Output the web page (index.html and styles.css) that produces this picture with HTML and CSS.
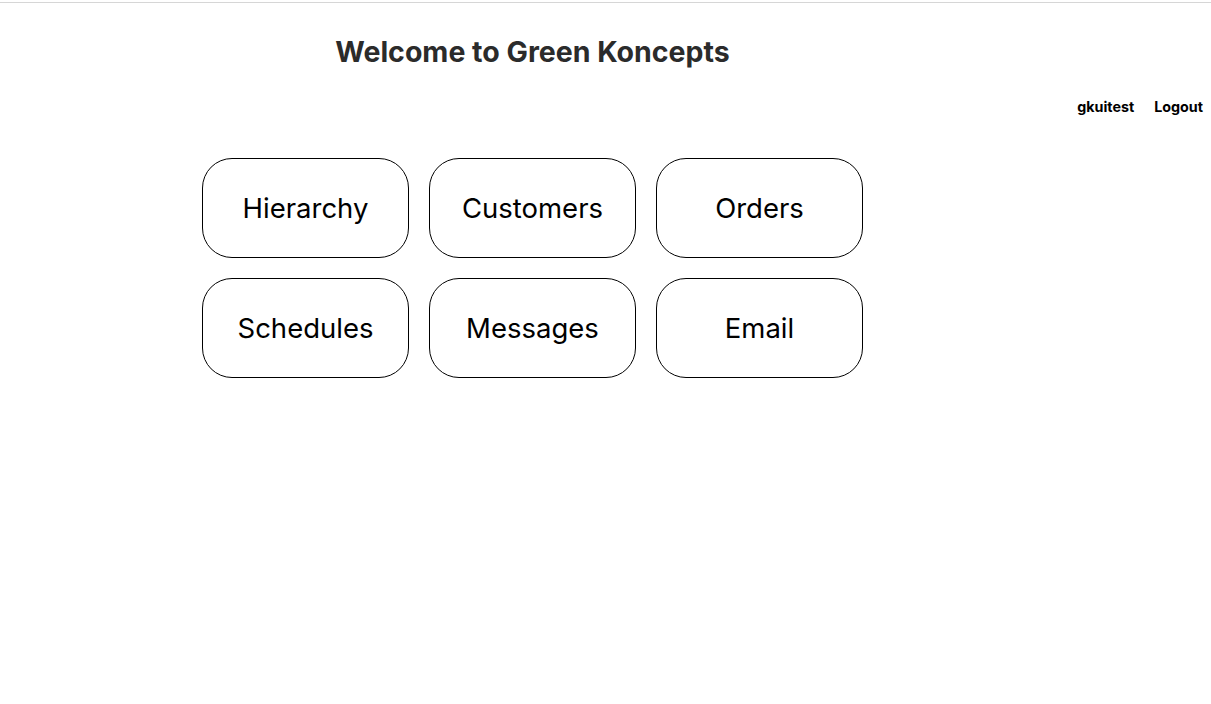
FILE: index.html
```html
<!DOCTYPE html>
<html>
<head>
<meta charset="utf-8">
<link rel="stylesheet" href="styles.css">
</head>
<body>
<div class="topline"></div>
<header class="header">
  <h1 class="title">Welcome to Green Koncepts</h1>
</header>
<nav class="usernav">
  <a class="navlink">gkuitest</a>
  <a class="navlink">Logout</a>
</nav>
<main class="tiles">
  <button class="tile">Hierarchy</button>
  <button class="tile">Customers</button>
  <button class="tile">Orders</button>
  <button class="tile">Schedules</button>
  <button class="tile">Messages</button>
  <button class="tile">Email</button>
</main>
</body>
</html>
```
FILE: styles.css
```css
html, body {
  margin: 0;
  padding: 0;
  background: #fff;
}
body {
  font-family: Inter, "Noto Sans", "Liberation Sans", sans-serif;
  color: #000;
}
.topline {
  margin-top: 2px;
  border-top: 1px solid #d6d6d6;
}
.header {
  width: 661px;
  margin-left: 202px;
  padding-top: 32px;
}
.title {
  margin: 0;
  text-align: center;
  font-size: 28.5px;
  font-weight: 700;
  color: #2b2b2b;
  line-height: 34px;
}
.usernav {
  display: flex;
  justify-content: flex-end;
  gap: 20px;
  padding-right: 8px;
  margin-top: 29px;
}
.navlink {
  font-size: 14.3px;
  font-weight: 700;
  line-height: 17px;
  color: #000;
}
.tiles {
  display: grid;
  grid-template-columns: repeat(3, 207px);
  grid-auto-rows: 100px;
  gap: 20px;
  margin-left: 202px;
  margin-top: 43px;
}
.tile {
  box-sizing: border-box;
  border: 1px solid #000;
  border-radius: 30px;
  background: #fff;
  font-family: inherit;
  font-size: 27.5px;
  font-weight: 400;
  color: #000;
  padding: 0;
}
```
